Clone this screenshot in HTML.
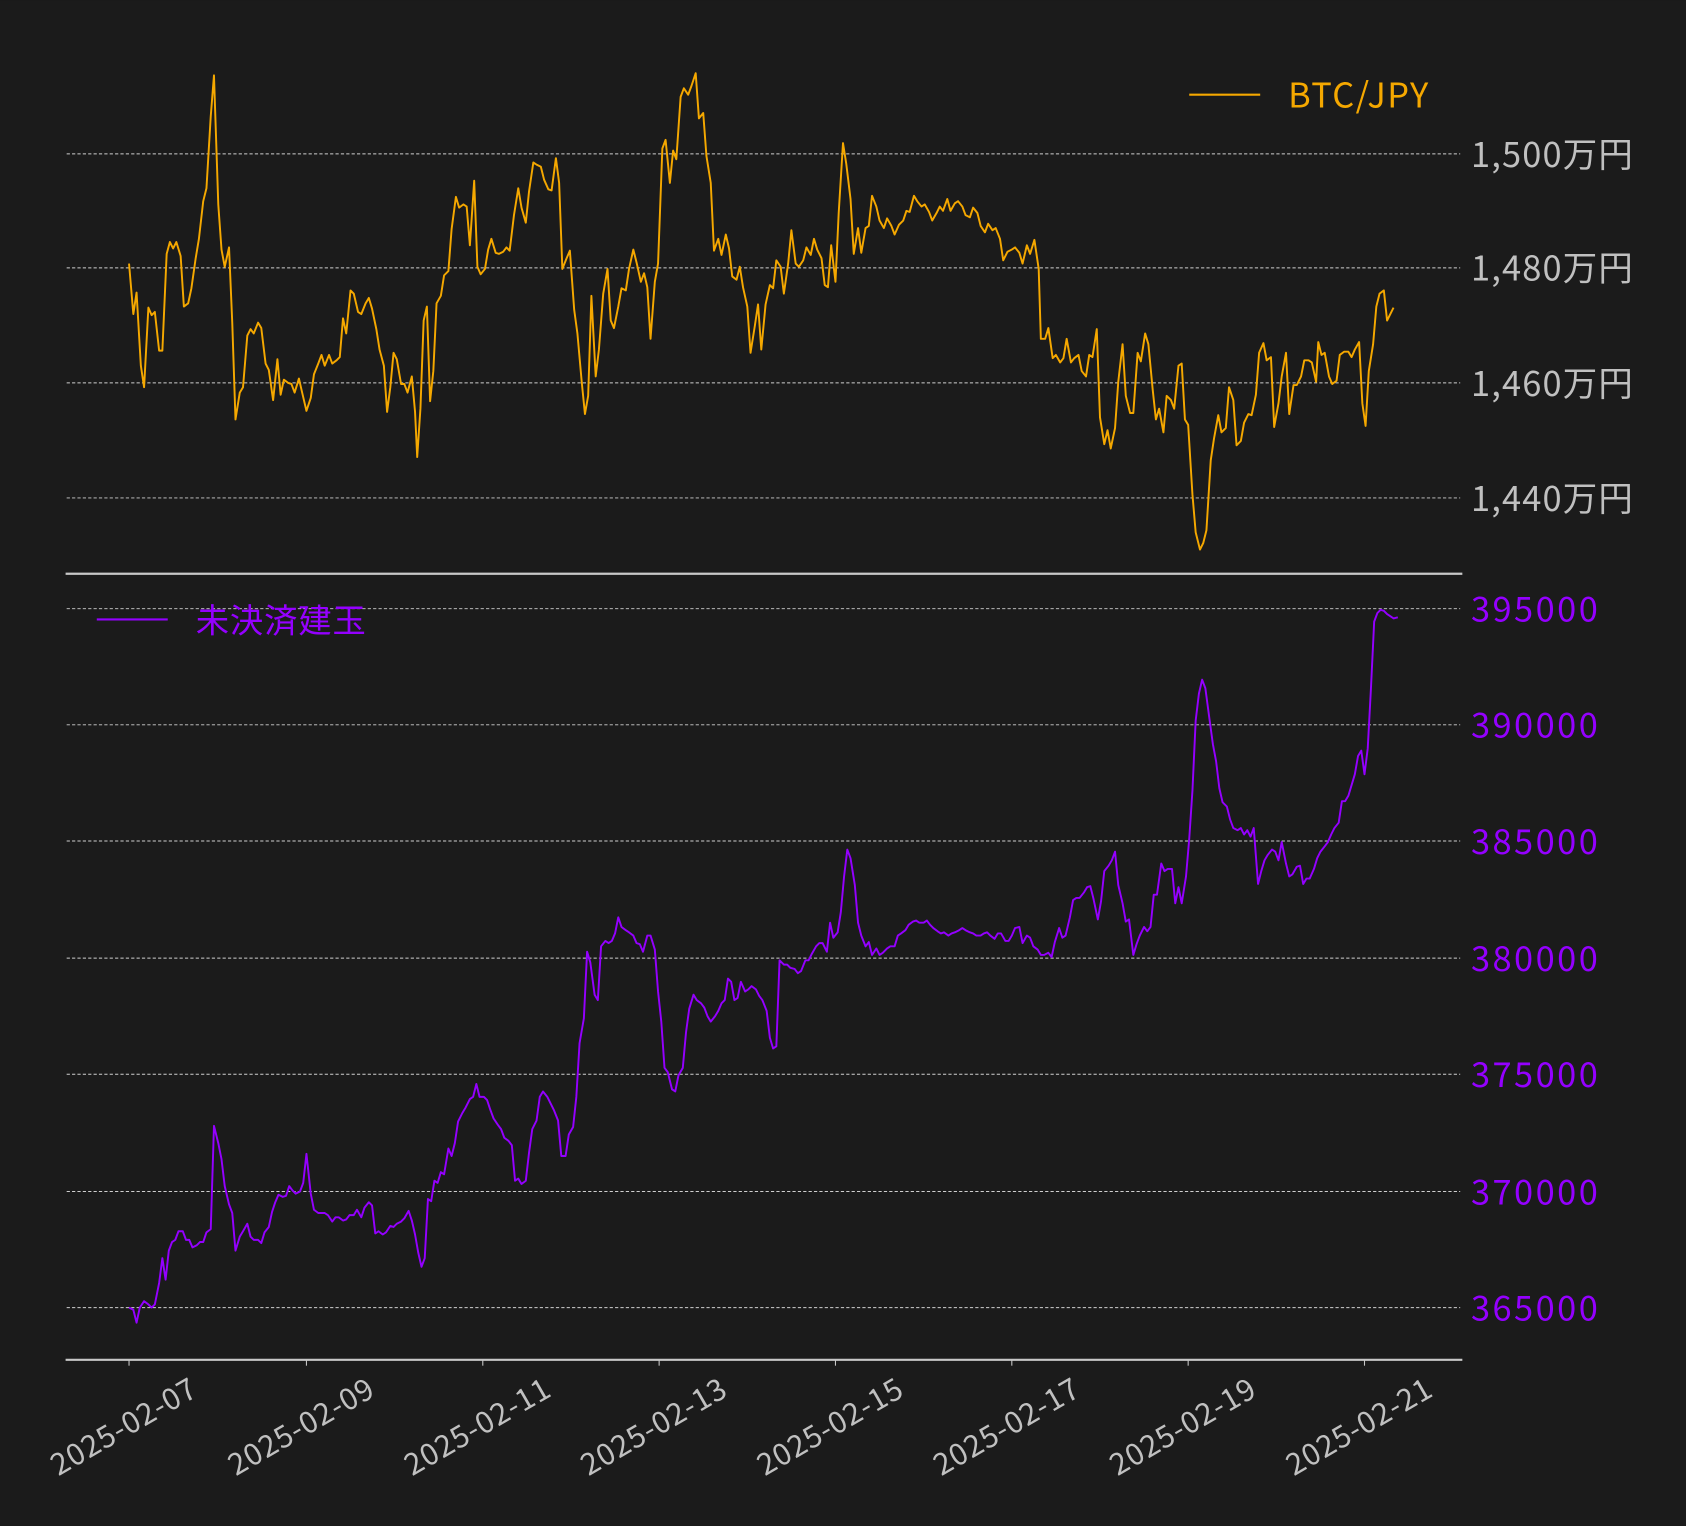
<!DOCTYPE html>
<html><head><meta charset="utf-8"><style>
html,body{margin:0;padding:0;background:#1b1b1b;}
svg{display:block;}
text{font-family:"Noto Sans CJK JP","Liberation Sans",sans-serif;}
</style></head><body>
<svg width="1686" height="1526" viewBox="0 0 1568 1419" xmlns="http://www.w3.org/2000/svg">
<rect width="1568" height="1419" fill="#1b1b1b"/>
<g stroke="#cfcfcf" stroke-width="0.9" stroke-dasharray="3,2">
<line x1="62" y1="143" x2="1358" y2="143"/>
<line x1="62" y1="249" x2="1358" y2="249"/>
<line x1="62" y1="356" x2="1358" y2="356"/>
<line x1="62" y1="463" x2="1358" y2="463"/>
<line x1="62" y1="566" x2="1358" y2="566"/>
<line x1="62" y1="674" x2="1358" y2="674"/>
<line x1="62" y1="782" x2="1358" y2="782"/>
<line x1="62" y1="891" x2="1358" y2="891"/>
<line x1="62" y1="999" x2="1358" y2="999"/>
<line x1="62" y1="1108" x2="1358" y2="1108"/>
<line x1="62" y1="1216" x2="1358" y2="1216"/>
</g>
<line x1="61" y1="533.5" x2="1360" y2="533.5" stroke="#c8c8c8" stroke-width="2"/>
<line x1="61" y1="1264.5" x2="1360" y2="1264.5" stroke="#c8c8c8" stroke-width="2"/>
<g stroke="#c8c8c8" stroke-width="1">
<line x1="120" y1="1265" x2="120" y2="1270"/><line x1="285" y1="1265" x2="285" y2="1270"/><line x1="449" y1="1265" x2="449" y2="1270"/><line x1="613" y1="1265" x2="613" y2="1270"/><line x1="777" y1="1265" x2="777" y2="1270"/><line x1="941" y1="1265" x2="941" y2="1270"/><line x1="1105" y1="1265" x2="1105" y2="1270"/><line x1="1269" y1="1265" x2="1269" y2="1270"/>
</g>
<g fill="#c0c0c0" font-size="32" letter-spacing="1.1">
<text x="1368" y="155">1,500万円</text>
<text x="1368" y="261">1,480万円</text>
<text x="1368" y="368">1,460万円</text>
<text x="1368" y="475">1,440万円</text>
</g>
<g fill="#9400ff" font-size="32" letter-spacing="2.3">
<text x="1368" y="578">395000</text>
<text x="1368" y="686">390000</text>
<text x="1368" y="794">385000</text>
<text x="1368" y="903">380000</text>
<text x="1368" y="1011">375000</text>
<text x="1368" y="1120">370000</text>
<text x="1368" y="1228">365000</text>
</g>
<g fill="#c0c0c0" font-size="28" letter-spacing="0.8" text-anchor="middle">
<text transform="translate(120,1335) rotate(-30)">2025-02-07</text>
<text transform="translate(285,1335) rotate(-30)">2025-02-09</text>
<text transform="translate(449,1335) rotate(-30)">2025-02-11</text>
<text transform="translate(613,1335) rotate(-30)">2025-02-13</text>
<text transform="translate(777,1335) rotate(-30)">2025-02-15</text>
<text transform="translate(941,1335) rotate(-30)">2025-02-17</text>
<text transform="translate(1105,1335) rotate(-30)">2025-02-19</text>
<text transform="translate(1269,1335) rotate(-30)">2025-02-21</text>
</g>
<line x1="1106" y1="88" x2="1172" y2="88" stroke="#f5a800" stroke-width="2"/>
<text x="1198" y="100" fill="#f5a800" font-size="32" letter-spacing="1.3">BTC/JPY</text>
<line x1="90" y1="576" x2="156" y2="576" stroke="#9400ff" stroke-width="2"/>
<text x="182" y="588" fill="#9400ff" font-size="31" letter-spacing="0.8">未決済建玉</text>
<polyline fill="none" stroke="#f5a800" stroke-width="1.8" stroke-linejoin="round" points="120,245 124,292 127,272 131,340 134,360 138,286 141,293 144,290 148,326 151,326 155,236 158,225 161,231 164,225 168,238 171,285 175,282 178,268 182,240 185,222 189,187 192,175 196,108 199,70 203,190 206,232 209,248 213,230 216,300 219,390 223,365 226,360 230,312 233,306 236,310 240,300 243,305 247,338 250,344 254,372 258,334 261,367 264,353 268,356 271,357 274,365 278,352 281,365 285,382 289,370 292,348 296,338 299,330 302,340 306,330 309,338 313,335 316,332 319,296 322,310 326,270 329,273 333,290 336,292 340,282 343,277 346,287 350,306 353,325 357,340 360,383 363,360 366,328 369,334 373,357 376,357 379,365 383,350 386,383 388,425 391,380 394,298 397,285 400,373 403,345 406,282 410,275 413,256 417,252 420,213 424,183 427,193 431,190 434,192 437,228 441,168 444,248 447,255 451,250 454,232 457,222 461,235 464,236 468,234 471,230 474,233 478,200 482,175 485,193 489,207 492,178 496,151 499,153 503,155 506,167 510,176 513,177 517,147 520,170 523,250 527,240 530,233 534,288 537,310 541,355 544,385 547,368 550,275 554,350 557,325 561,273 565,250 568,298 571,305 575,285 578,268 582,270 585,250 589,232 592,244 596,262 599,254 602,267 605,315 609,262 612,245 616,138 619,130 623,170 626,140 629,148 633,90 636,82 640,88 643,80 647,68 650,110 654,105 657,145 661,170 664,233 668,222 671,237 675,218 678,231 681,257 685,260 688,248 691,267 695,285 698,328 702,303 705,283 708,325 712,283 716,265 719,268 722,242 726,248 729,273 733,245 736,214 740,245 743,248 747,242 750,230 754,237 757,222 760,232 764,240 767,265 770,267 773,228 777,262 780,198 784,133 787,152 791,185 794,236 798,212 801,235 805,212 808,210 811,182 815,192 818,205 822,212 825,203 829,210 832,218 836,209 840,205 843,196 846,197 850,182 853,187 857,192 860,190 864,197 867,205 871,198 874,192 877,196 881,185 884,196 888,189 891,187 895,192 898,200 902,202 905,193 909,198 912,210 916,216 919,208 923,214 926,212 930,222 933,242 937,234 941,232 944,230 948,235 951,245 955,228 958,236 962,223 966,250 968,315 972,315 975,305 979,333 982,330 986,337 989,333 992,315 996,337 999,333 1003,330 1006,345 1010,350 1013,330 1016,332 1020,306 1023,388 1027,413 1030,400 1033,417 1037,398 1040,355 1044,320 1047,368 1051,384 1054,384 1058,328 1061,336 1065,310 1068,320 1072,362 1075,390 1078,380 1082,402 1085,368 1089,372 1092,380 1096,340 1099,338 1102,390 1105,395 1109,460 1112,495 1116,511 1119,505 1122,493 1126,428 1129,408 1133,386 1136,402 1140,398 1143,360 1147,372 1150,414 1154,410 1157,393 1161,385 1164,386 1168,367 1171,328 1175,319 1178,335 1182,332 1185,397 1189,375 1192,350 1196,328 1199,385 1203,358 1206,358 1210,350 1213,335 1217,335 1220,337 1224,355 1226,318 1229,330 1232,328 1236,350 1239,357 1243,354 1246,330 1250,327 1254,327 1257,332 1260,325 1264,318 1267,375 1270,396 1273,345 1277,320 1280,285 1283,273 1287,270 1290,298 1294,290 1296,286"/>
<polyline fill="none" stroke="#9400ff" stroke-width="1.8" stroke-linejoin="round" points="120,1216 124,1218 127,1230 130,1216 134,1210 138,1213 141,1216 144,1213 148,1193 151,1170 154,1190 157,1163 160,1155 163,1153 166,1145 170,1145 173,1153 176,1153 179,1160 183,1158 186,1155 189,1155 192,1146 196,1143 199,1047 203,1063 206,1078 209,1103 213,1120 216,1128 219,1163 223,1150 226,1145 230,1138 233,1150 236,1153 240,1153 243,1156 246,1146 250,1141 253,1127 256,1118 259,1111 263,1113 266,1112 269,1103 272,1107 275,1110 279,1108 282,1100 285,1073 289,1110 292,1125 296,1128 299,1128 302,1128 305,1130 309,1136 312,1132 315,1132 319,1135 322,1134 325,1130 329,1130 332,1125 336,1132 339,1123 343,1118 346,1121 349,1147 352,1145 356,1148 359,1146 363,1140 366,1141 369,1138 373,1136 376,1133 380,1126 383,1135 386,1148 389,1165 392,1178 395,1170 398,1115 401,1117 404,1098 407,1100 410,1090 413,1092 417,1068 420,1075 423,1063 426,1043 430,1035 433,1030 437,1022 440,1020 443,1008 446,1020 450,1020 453,1023 456,1032 459,1040 463,1046 466,1050 469,1058 473,1061 476,1065 479,1098 482,1096 485,1101 489,1098 492,1072 495,1050 499,1042 502,1020 505,1015 509,1020 512,1026 515,1032 519,1042 522,1075 526,1075 529,1055 533,1048 536,1020 539,970 543,947 546,885 549,895 553,925 556,930 559,880 563,875 566,877 569,875 572,868 575,853 578,862 582,865 585,867 589,870 592,877 595,878 598,885 602,870 605,870 609,883 612,922 615,950 618,993 621,997 625,1013 628,1015 631,1000 635,993 638,960 641,938 645,925 648,930 652,933 655,937 658,945 661,950 665,945 668,940 671,933 674,930 677,910 680,913 683,930 686,928 689,913 693,922 696,920 699,917 703,920 706,926 709,930 713,940 716,965 719,975 722,973 725,893 729,897 732,897 735,900 739,901 742,905 745,903 749,893 752,893 755,887 759,880 762,877 765,877 769,885 772,858 775,872 779,867 782,848 785,815 788,790 791,798 795,823 798,858 801,870 805,880 808,876 811,888 815,882 818,888 821,886 825,882 828,880 832,880 835,870 838,868 842,865 845,860 849,857 852,856 855,858 859,858 862,856 865,860 868,863 872,866 875,868 878,867 882,870 885,868 888,867 892,865 895,863 898,865 902,867 905,868 908,870 912,870 915,868 918,867 921,870 925,873 928,868 931,868 935,875 938,875 941,870 944,863 948,862 951,877 955,870 958,872 961,880 965,883 968,888 971,888 975,886 978,890 981,876 985,863 988,872 991,870 995,853 998,837 1001,835 1004,835 1008,830 1011,825 1014,824 1017,836 1021,855 1024,838 1027,810 1031,805 1034,800 1037,792 1040,823 1044,840 1047,857 1050,855 1054,888 1057,878 1060,870 1064,862 1067,866 1070,862 1073,832 1076,832 1080,803 1083,810 1086,808 1090,808 1093,840 1096,825 1099,840 1103,815 1106,780 1109,735 1112,670 1115,645 1118,632 1121,640 1125,670 1128,692 1131,708 1134,733 1137,746 1141,750 1144,762 1147,770 1151,772 1154,770 1157,776 1160,772 1163,778 1166,770 1170,822 1173,810 1176,800 1179,795 1183,790 1186,792 1189,800 1192,783 1196,803 1199,815 1202,813 1206,806 1209,805 1212,822 1215,817 1218,817 1222,808 1225,798 1228,792 1232,787 1235,783 1238,776 1241,770 1245,765 1248,745 1251,745 1254,740 1257,730 1260,720 1263,703 1266,698 1269,720 1272,696 1275,640 1278,578 1281,570 1284,567 1287,568 1290,571 1293,573 1296,575 1300,574"/>
</svg>
</body></html>
